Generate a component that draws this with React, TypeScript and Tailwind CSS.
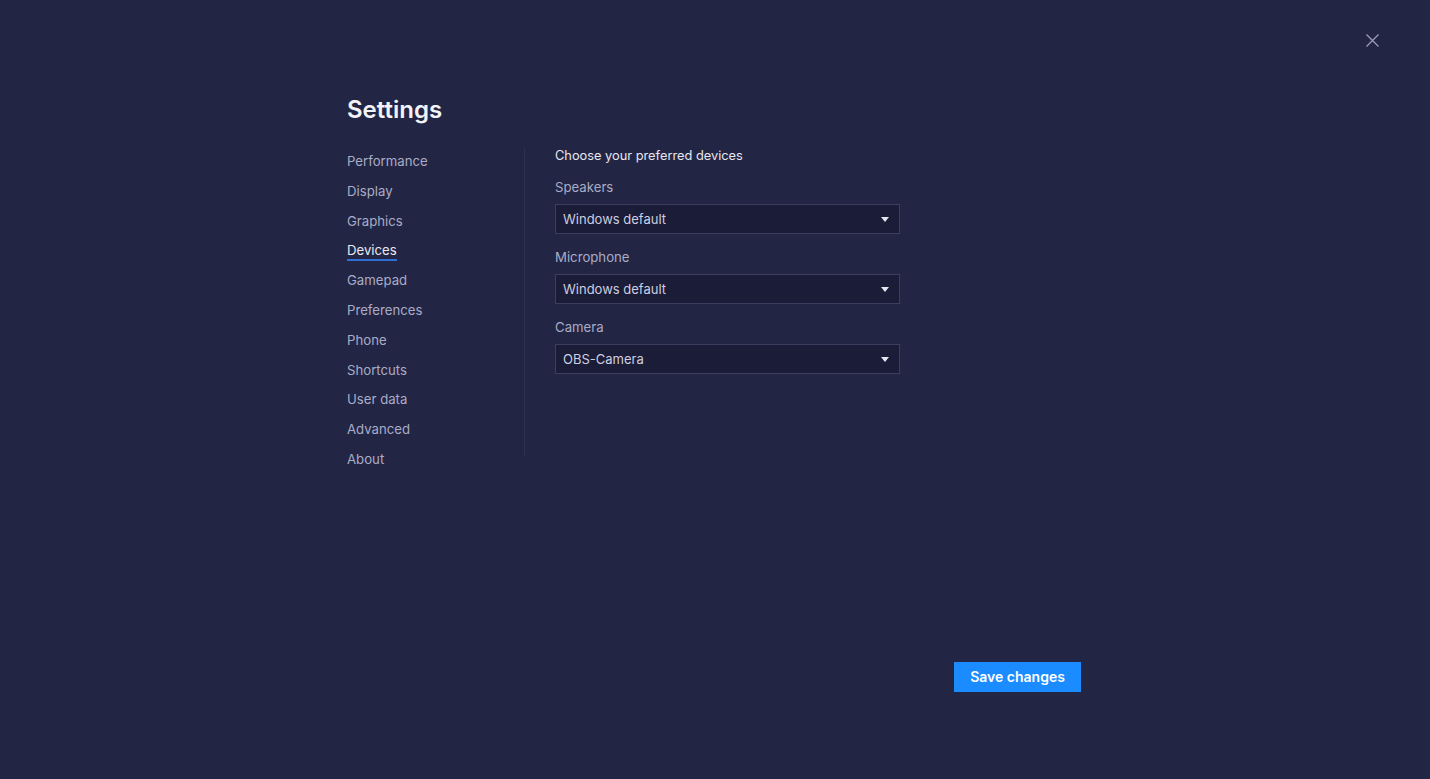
const navItems = [
  'Performance',
  'Display',
  'Graphics',
  'Devices',
  'Gamepad',
  'Preferences',
  'Phone',
  'Shortcuts',
  'User data',
  'Advanced',
  'About',
];

const devices = [
  { label: 'Speakers', value: 'Windows default' },
  { label: 'Microphone', value: 'Windows default' },
  { label: 'Camera', value: 'OBS-Camera' },
];

const DeviceSelect = ({ label, value }: { label: string; value: string }) => (
  <div className="flex flex-col">
    <span className="text-[13.2px] leading-[20px] text-[#a9acc6]">{label}</span>
    <button className="mt-[7px] h-[30px] w-[345px] flex items-center justify-between pl-[7px] pr-[10px] pt-px bg-[#1b1c37] border border-[#3b3e5e] text-left">
      <span className="text-[13px] text-[#cdcfe0]">{value}</span>
      <svg width="8" height="5" viewBox="0 0 8 5">
        <path d="M0 0H8L4 5Z" fill="#e4e6f0" />
      </svg>
    </button>
  </div>
);

export default function App() {
  return (
    <div
      className="relative w-full h-[779px] bg-[#232544] overflow-hidden"
      style={{ fontFamily: 'Inter, "Noto Sans", sans-serif' }}
    >
      {/* Close */}
      <button className="absolute top-[34px] right-[51px] text-[#9a9db8]">
        <svg width="13" height="13" viewBox="0 0 13 13" stroke="currentColor" strokeWidth="1.3" fill="none">
          <path d="M0.5 0.5L12.5 12.5M12.5 0.5L0.5 12.5" />
        </svg>
      </button>

      <div className="pt-[94px] pl-[347px] w-[1081px] flex flex-col">
        <h1 className="text-[24px] leading-[32px] font-semibold text-[#f2f3f8]">Settings</h1>

        <div className="mt-[20px] flex">
          {/* Nav */}
          <nav className="w-[177px] pt-[5px] flex flex-col gap-[9.8px]">
            {navItems.map((item) =>
              item === 'Devices' ? (
                <span key={item} className="relative text-[13.2px] leading-[20px] text-[#e8e9f2] w-fit">
                  {item}
                  <span className="absolute left-0 right-0 -bottom-[1px] h-[2px] bg-[#2f6fd4]" />
                </span>
              ) : (
                <span key={item} className="text-[13.2px] leading-[20px] text-[#a9acc6]">
                  {item}
                </span>
              )
            )}
          </nav>

          <div className="w-px h-[308px] mt-[2px] bg-[#2d3050]" />

          {/* Content */}
          <div className="pl-[30px] flex flex-col">
            <h2 className="text-[12.8px] leading-[20px] text-[#e6e7f0]">Choose your preferred devices</h2>
            <div className="mt-[11px] flex flex-col gap-[13px]">
              {devices.map((d) => (
                <DeviceSelect key={d.label} label={d.label} value={d.value} />
              ))}
            </div>
          </div>
        </div>

        <div className="mt-[193px] flex justify-end">
          <button className="w-[127px] h-[30px] bg-[#1a8cff] text-white text-[14px] font-semibold">
            Save changes
          </button>
        </div>
      </div>
    </div>
  );
}
